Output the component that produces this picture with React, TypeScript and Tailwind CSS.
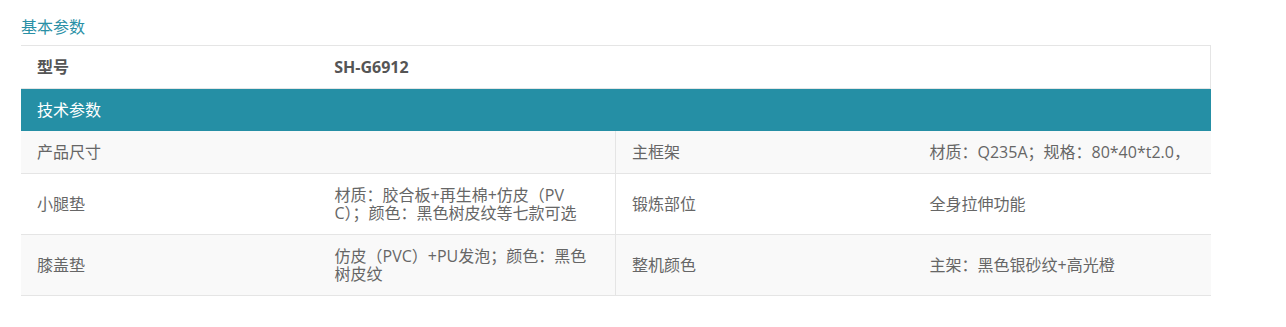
const rows = [
  { k1: '产品尺寸', v1: '', k2: '主框架', v2: '材质：Q235A；规格：80*40*t2.0，', bg: 'bg-[#f9f9f9]' },
  { k1: '小腿垫', v1: '材质：胶合板+再生棉+仿皮（PVC）；颜色：黑色树皮纹等七款可选', k2: '锻炼部位', v2: '全身拉伸功能', bg: 'bg-white' },
  { k1: '膝盖垫', v1: '仿皮（PVC）+PU发泡；颜色：黑色树皮纹', k2: '整机颜色', v2: '主架：黑色银砂纹+高光橙', bg: 'bg-[#f9f9f9]' },
];

export default function App() {
  return (
    <div className="min-h-[327px] bg-white pt-[17px] pl-[21px] font-['Open_Sans','Noto_Sans_CJK_SC',sans-serif] text-[16px] text-[#666]">
      <h3 className="mb-[8px] text-[16px] font-normal leading-[20px] text-[#2a90a6]">基本参数</h3>

      <div className="w-[1190px]">
        {/* 基本参数 */}
        <div className="grid grid-cols-4 items-center border-y border-r border-[#e5e5e5] bg-white leading-[18px]">
          <div className="px-4 py-[12px] font-bold text-[#555]">型号</div>
          <div className="col-span-3 px-4 py-[12px] font-bold text-[#555]">SH-G6912</div>
        </div>

        {/* 技术参数 */}
        <div className="bg-[#258fa5] px-4 py-[12px] leading-[18px] text-white">技术参数</div>

        {rows.map((r) => (
          <div key={r.k1} className={`grid grid-cols-4 border-b border-[#e5e5e5] leading-[18px] ${r.bg}`}>
            <div className="flex items-center px-4 py-[12px]">{r.k1}</div>
            <div className="flex items-center border-r border-[#e5e5e5] py-[12px] pl-4 pr-[28px] break-all">{r.v1}</div>
            <div className="flex items-center px-4 py-[12px]">{r.k2}</div>
            <div className="flex items-center px-4 py-[12px] break-all">{r.v2}</div>
          </div>
        ))}
      </div>
    </div>
  );
}
